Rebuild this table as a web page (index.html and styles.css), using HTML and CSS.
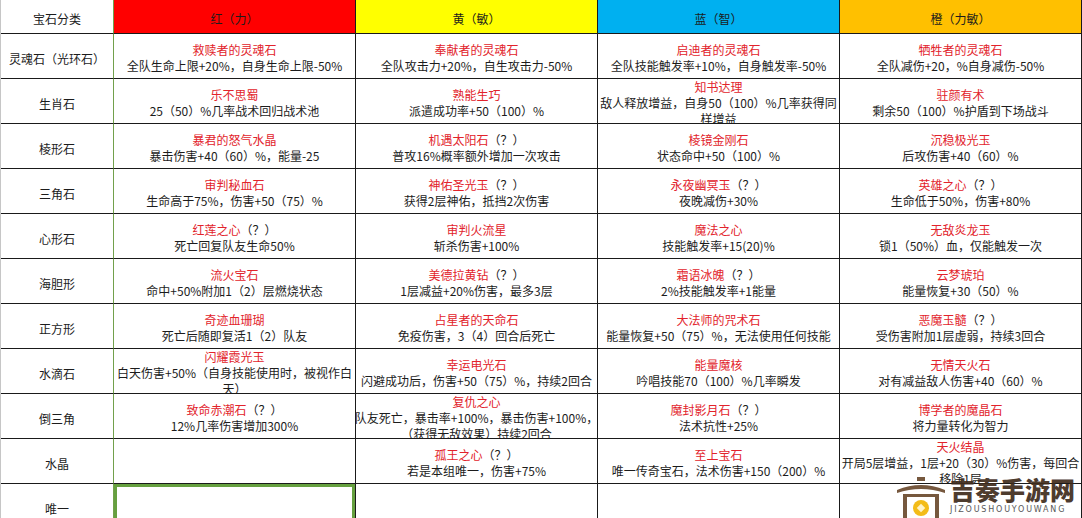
FILE: index.html
```html
<!DOCTYPE html>
<html lang="zh-CN">
<head>
<meta charset="utf-8">
<title>宝石分类</title>
<link rel="stylesheet" href="styles.css">
</head>
<body>
<div class="sheet">
  <div class="grid">
    <div class="cell label head">宝石分类</div>
    <div class="cell head h-red">红（力）</div>
    <div class="cell head h-yellow">黄（敏）</div>
    <div class="cell head h-blue">蓝（智）</div>
    <div class="cell head h-orange">橙（力敏）</div>

    <div class="cell label">灵魂石（光环石）</div>
    <div class="cell"><span class="n">救赎者的灵魂石</span><span>全队生命上限+20%，自身生命上限-50%</span></div>
    <div class="cell"><span class="n">奉献者的灵魂石</span><span>全队攻击力+20%，自生攻击力-50%</span></div>
    <div class="cell"><span class="n">启迪者的灵魂石</span><span>全队技能触发率+10%，自身触发率-50%</span></div>
    <div class="cell"><span class="n">牺牲者的灵魂石</span><span>全队减伤+20，%自身减伤-50%</span></div>

    <div class="cell label">生肖石</div>
    <div class="cell"><span class="n">乐不思蜀</span><span>25（50）%几率战术回归战术池</span></div>
    <div class="cell"><span class="n">熟能生巧</span><span>派遣成功率+50（100）%</span></div>
    <div class="cell"><span class="n">知书达理</span><span>敌人释放增益，自身50（100）%几率获得同</span><span>样增益</span></div>
    <div class="cell"><span class="n">驻颜有术</span><span>剩余50（100）%护盾到下场战斗</span></div>

    <div class="cell label">棱形石</div>
    <div class="cell"><span class="n">暴君的怒气水晶</span><span>暴击伤害+40（60）%，能量-25</span></div>
    <div class="cell"><span class="n">机遇太阳石<b>（？）</b></span><span>普攻16%概率额外增加一次攻击</span></div>
    <div class="cell"><span class="n">棱镜金刚石</span><span>状态命中+50（100）%</span></div>
    <div class="cell"><span class="n">沉稳极光玉</span><span>后攻伤害+40（60）%</span></div>

    <div class="cell label">三角石</div>
    <div class="cell"><span class="n">审判秘血石</span><span>生命高于75%，伤害+50（75）%</span></div>
    <div class="cell"><span class="n">神佑圣光玉<b>（？）</b></span><span>获得2层神佑，抵挡2次伤害</span></div>
    <div class="cell"><span class="n">永夜幽冥玉<b>（？）</b></span><span>夜晚减伤+30%</span></div>
    <div class="cell"><span class="n">英雄之心<b>（？）</b></span><span>生命低于50%，伤害+80%</span></div>

    <div class="cell label">心形石</div>
    <div class="cell"><span class="n">红莲之心<b>（？）</b></span><span>死亡回复队友生命50%</span></div>
    <div class="cell"><span class="n">审判火流星</span><span>斩杀伤害+100%</span></div>
    <div class="cell"><span class="n">魔法之心</span><span>技能触发率+15(20)%</span></div>
    <div class="cell"><span class="n">无敌炎龙玉</span><span>锁1（50%）血，仅能触发一次</span></div>

    <div class="cell label">海胆形</div>
    <div class="cell"><span class="n">流火宝石</span><span>命中+50%附加1（2）层燃烧状态</span></div>
    <div class="cell"><span class="n">美德拉黄钻<b>（？）</b></span><span>1层减益+20%伤害，最多3层</span></div>
    <div class="cell"><span class="n">霜语冰魄<b>（？）</b></span><span>2%技能触发率+1能量</span></div>
    <div class="cell"><span class="n">云梦琥珀</span><span>能量恢复+30（50）%</span></div>

    <div class="cell label">正方形</div>
    <div class="cell"><span class="n">奇迹血珊瑚</span><span>死亡后随即复活1（2）队友</span></div>
    <div class="cell"><span class="n">占星者的天命石</span><span>免疫伤害，3（4）回合后死亡</span></div>
    <div class="cell"><span class="n">大法师的咒术石</span><span>能量恢复+50（75）%，无法使用任何技能</span></div>
    <div class="cell"><span class="n">恶魔玉髓<b>（？）</b></span><span>受伤害附加1层虚弱，持续3回合</span></div>

    <div class="cell label">水滴石</div>
    <div class="cell"><span class="n">闪耀霞光玉</span><span>白天伤害+50%（自身技能使用时，被视作白</span><span>天）</span></div>
    <div class="cell"><span class="n">幸运电光石</span><span>闪避成功后，伤害+50（75）%，持续2回合</span></div>
    <div class="cell"><span class="n">能量魔核</span><span>吟唱技能70（100）%几率瞬发</span></div>
    <div class="cell"><span class="n">无情天火石</span><span>对有减益敌人伤害+40（60）%</span></div>

    <div class="cell label">倒三角</div>
    <div class="cell"><span class="n">致命赤潮石<b>（？）</b></span><span>12%几率伤害增加300%</span></div>
    <div class="cell"><span class="n">复仇之心</span><span>队友死亡，暴击率+100%，暴击伤害+100%，</span><span>（获得无敌效果）持续2回合</span></div>
    <div class="cell"><span class="n">魔封影月石<b>（？）</b></span><span>法术抗性+25%</span></div>
    <div class="cell"><span class="n">博学者的魔晶石</span><span>将力量转化为智力</span></div>

    <div class="cell label">水晶</div>
    <div class="cell"></div>
    <div class="cell"><span class="n">孤王之心<b>（？）</b></span><span>若是本组唯一，伤害+75%</span></div>
    <div class="cell"><span class="n">至上宝石</span><span>唯一传奇宝石，法术伤害+150（200）%</span></div>
    <div class="cell"><span class="n">天火结晶</span><span>开局5层增益，1层+20（30）%伤害，每回合</span><span>移除1层</span></div>

    <div class="cell label">唯一</div>
    <div class="cell selected"></div>
    <div class="cell"></div>
    <div class="cell"></div>
    <div class="cell"></div>
  </div>

  <div class="watermark">
    <svg class="wm-icon" viewBox="0 0 50 42" width="50" height="42">
      <rect x="21" y="0" width="8" height="4" fill="#6b4a2e"/>
      <path d="M1 13 Q25 3 49 13 L49 16 Q25 8 1 16 Z" fill="#6b4a2e"/>
      <rect x="7" y="17" width="36" height="3" fill="#6b4a2e"/>
      <rect x="7" y="20" width="4" height="22" fill="#6b4a2e"/>
      <rect x="39" y="20" width="4" height="22" fill="#6b4a2e"/>
      <circle cx="25" cy="31" r="8" fill="#f2b705"/>
      <rect x="22" y="28" width="6" height="6" fill="#fff3c4" transform="rotate(45 25 31)"/>
    </svg>
    <div class="wm-text">
      <div class="wm-cn">吉奏手游网</div>
      <div class="wm-en">JIZOUSHOUYOUWANG</div>
    </div>
  </div>
</div>
</body>
</html>
```

FILE: styles.css
```css
html, body {
  margin: 0;
  padding: 0;
  background: #ffffff;
}

body {
  font-family: "Noto Sans CJK SC", "Noto Sans", sans-serif;
  font-size: 12px;
  color: #1c1c1c;
}

.sheet {
  position: relative;
  width: 1082px;
  height: 518px;
  overflow: hidden;
}

.grid {
  display: grid;
  grid-template-columns: 113px repeat(4, 242px);
  grid-template-rows: 34px repeat(11, 45px);
  border-left: 1px solid #c6c6c6;
  width: 1081px;
}

.cell {
  box-sizing: border-box;
  border-right: 1px solid #1a1a1a;
  border-bottom: 1px solid #1a1a1a;
  display: flex;
  flex-direction: column;
  align-items: center;
  justify-content: center;
  padding-top: 4px;
  line-height: 16px;
  white-space: nowrap;
  overflow: hidden;
  text-align: center;
}

.cell .n {
  color: #e2232b;
}

.cell .n b {
  font-weight: normal;
  color: #1c1c1c;
}

.label {
  border-right: 1px solid #72a04c;
  padding-top: 5px;
}

.head {
  padding-top: 4px;
}

.h-red { background: #ff0000; }
.h-yellow { background: #ffff00; }
.h-blue { background: #00b0f0; }
.h-orange { background: #ffc000; }

.selected {
  box-shadow: inset 0 0 0 3px #66a03f;
}

.watermark {
  position: absolute;
  left: 896px;
  top: 476px;
  display: flex;
  align-items: flex-start;
  gap: 4px;
  opacity: 0.92;
}

.wm-icon {
  display: block;
  margin-top: 1px;
}

.wm-text {
  display: flex;
  flex-direction: column;
}

.wm-cn {
  font-family: "Noto Sans CJK SC", sans-serif;
  font-weight: 900;
  font-size: 25px;
  line-height: 26px;
  color: #3f2c1d;
}

.wm-en {
  font-family: "DejaVu Sans", sans-serif;
  font-size: 8px;
  line-height: 10px;
  letter-spacing: 1.8px;
  color: #4a4a4a;
  margin-top: 3px;
}
```
